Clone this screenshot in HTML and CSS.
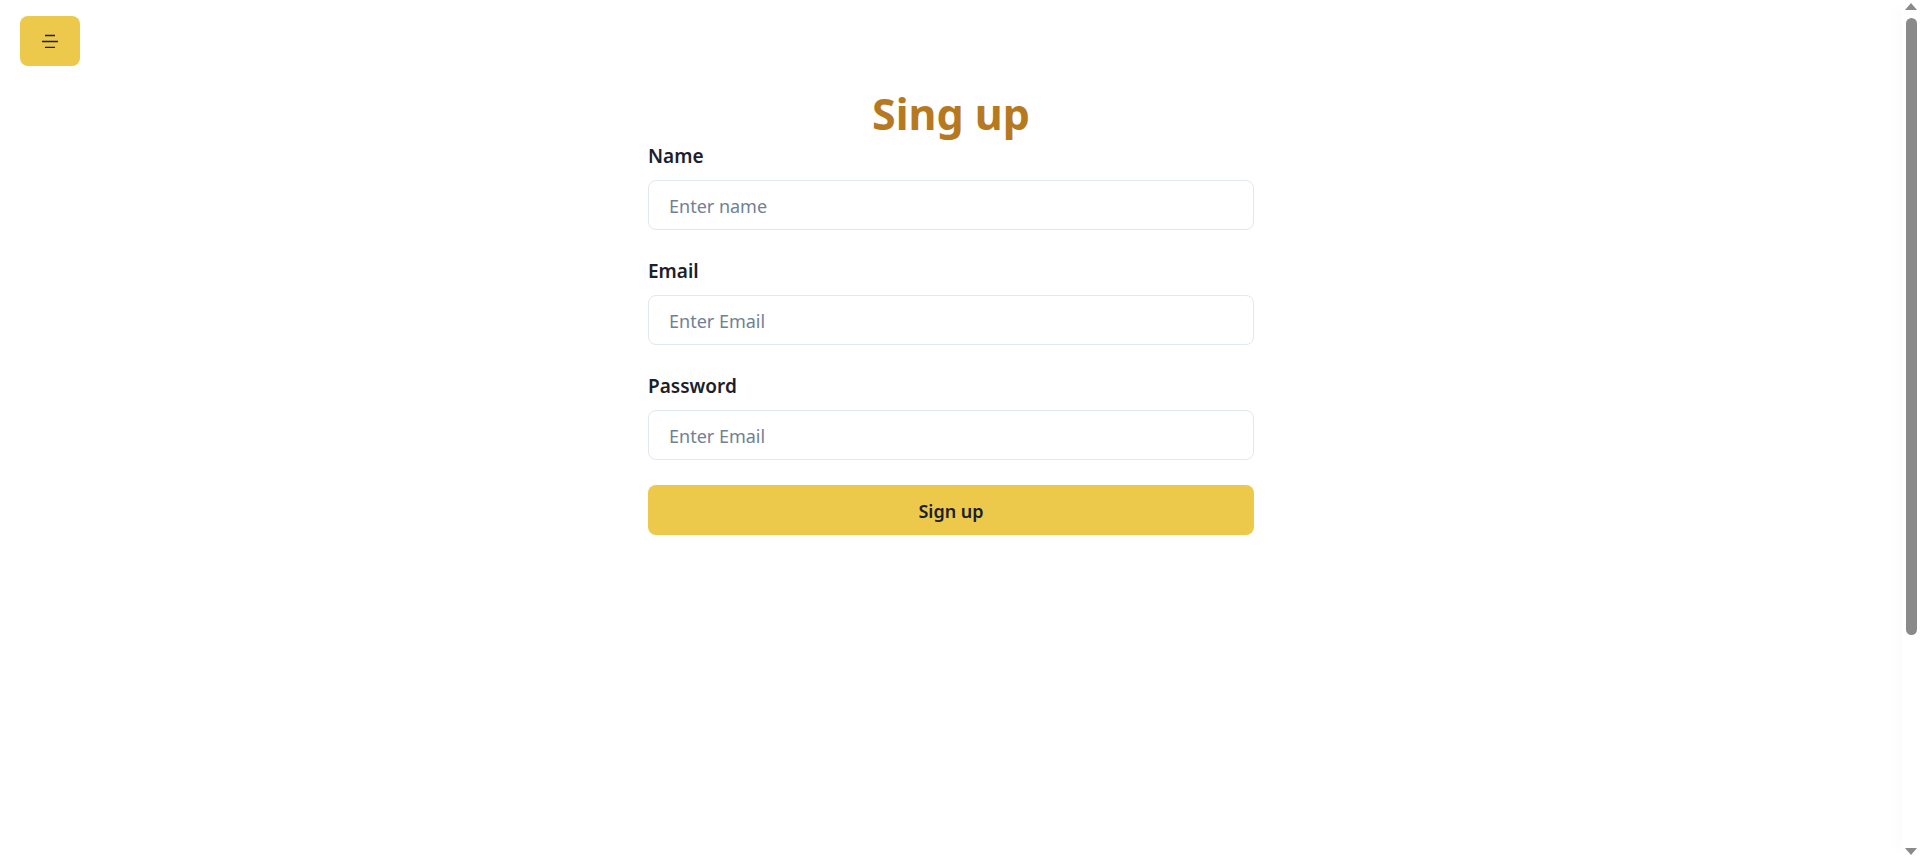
FILE: index.html
```html
<!DOCTYPE html>
<html lang="en">
<head>
<meta charset="utf-8">
<title>Sign up</title>
<link rel="stylesheet" href="styles.css">
</head>
<body>
<div class="app">
  <header class="topbar">
    <button class="menu-btn" type="button" aria-label="Menu">
      <svg width="16" height="14" viewBox="0 0 16 14" aria-hidden="true">
        <path d="M3 1.5h10M0 7.5h16M3 13.5h10" stroke="#1a202c" stroke-width="1.5" fill="none"/>
      </svg>
    </button>
  </header>
  <main class="page">
    <form class="signup">
      <h1 class="title">Sing up</h1>
      <div class="field">
        <label class="label" for="name">Name</label>
        <input class="input" id="name" type="text" placeholder="Enter name">
      </div>
      <div class="field">
        <label class="label" for="email">Email</label>
        <input class="input" id="email" type="email" placeholder="Enter Email">
      </div>
      <div class="field">
        <label class="label" for="password">Password</label>
        <input class="input" id="password" type="password" placeholder="Enter Email">
      </div>
      <button class="submit" type="button">Sign up</button>
    </form>
  </main>
</div>
<div class="scrollbar" aria-hidden="true">
  <span class="arrow arrow-up"></span>
  <span class="thumb"></span>
  <span class="arrow arrow-down"></span>
</div>
</body>
</html>
```

FILE: styles.css
```css
* { box-sizing: border-box; }
html, body { margin: 0; padding: 0; }
body {
  font-family: "Noto Sans", "Open Sans", sans-serif;
  color: #1a202c;
  background: #ffffff;
  height: 100vh;
  overflow: hidden;
  display: flex;
}
.app {
  flex: 1;
  min-width: 0;
}
.topbar {
  padding: 16px 0 0 20px;
  display: flex;
}
.menu-btn {
  width: 60px;
  height: 50px;
  border: none;
  border-radius: 8px;
  background: #ecc94b;
  display: flex;
  align-items: center;
  justify-content: center;
  padding: 0;
  cursor: pointer;
}
.menu-btn svg { display: block; }
.page {
  display: flex;
  justify-content: center;
}
.signup {
  width: 606px;
  display: flex;
  flex-direction: column;
}
.title {
  margin: 24px 0 2px;
  font-size: 43px;
  line-height: 48px;
  font-weight: 700;
  color: #b7791f;
  text-align: center;
}
.field {
  display: flex;
  flex-direction: column;
  gap: 9px;
  margin-bottom: 25px;
}
.label {
  padding-top: 1px;
  font-size: 19px;
  line-height: 30px;
  font-weight: 600;
  color: #1a202c;
}
.input {
  height: 50px;
  width: 100%;
  border: 1px solid #e2e8f0;
  border-radius: 8px;
  padding: 2px 20px 0;
  font-family: inherit;
  font-size: 18px;
  color: #1a202c;
  background: #fff;
  outline: none;
}
.input::placeholder { color: #718096; opacity: 1; }
.submit {
  height: 50px;
  width: 100%;
  border: none;
  border-radius: 8px;
  background: #ecc94b;
  padding: 2px 0 0;
  font-family: inherit;
  font-size: 18px;
  font-weight: 600;
  color: #1a202c;
  cursor: pointer;
}

/* browser-style scrollbar column */
.scrollbar {
  width: 18px;
  flex: none;
  height: 100vh;
  background: #ffffff;
  box-shadow: -10px 0 14px -8px rgba(0, 0, 0, 0.10);
  display: flex;
  flex-direction: column;
  align-items: center;
  padding: 3px 0 2px;
}
.arrow {
  width: 0;
  height: 0;
  border-left: 6px solid transparent;
  border-right: 6px solid transparent;
}
.arrow-up { border-bottom: 7px solid #8a8a8a; }
.arrow-down { border-top: 7px solid #8a8a8a; margin-top: auto; }
.thumb {
  width: 11px;
  height: 617px;
  margin-top: 8px;
  border-radius: 6px;
  background: #8a8a8a;
}
```
